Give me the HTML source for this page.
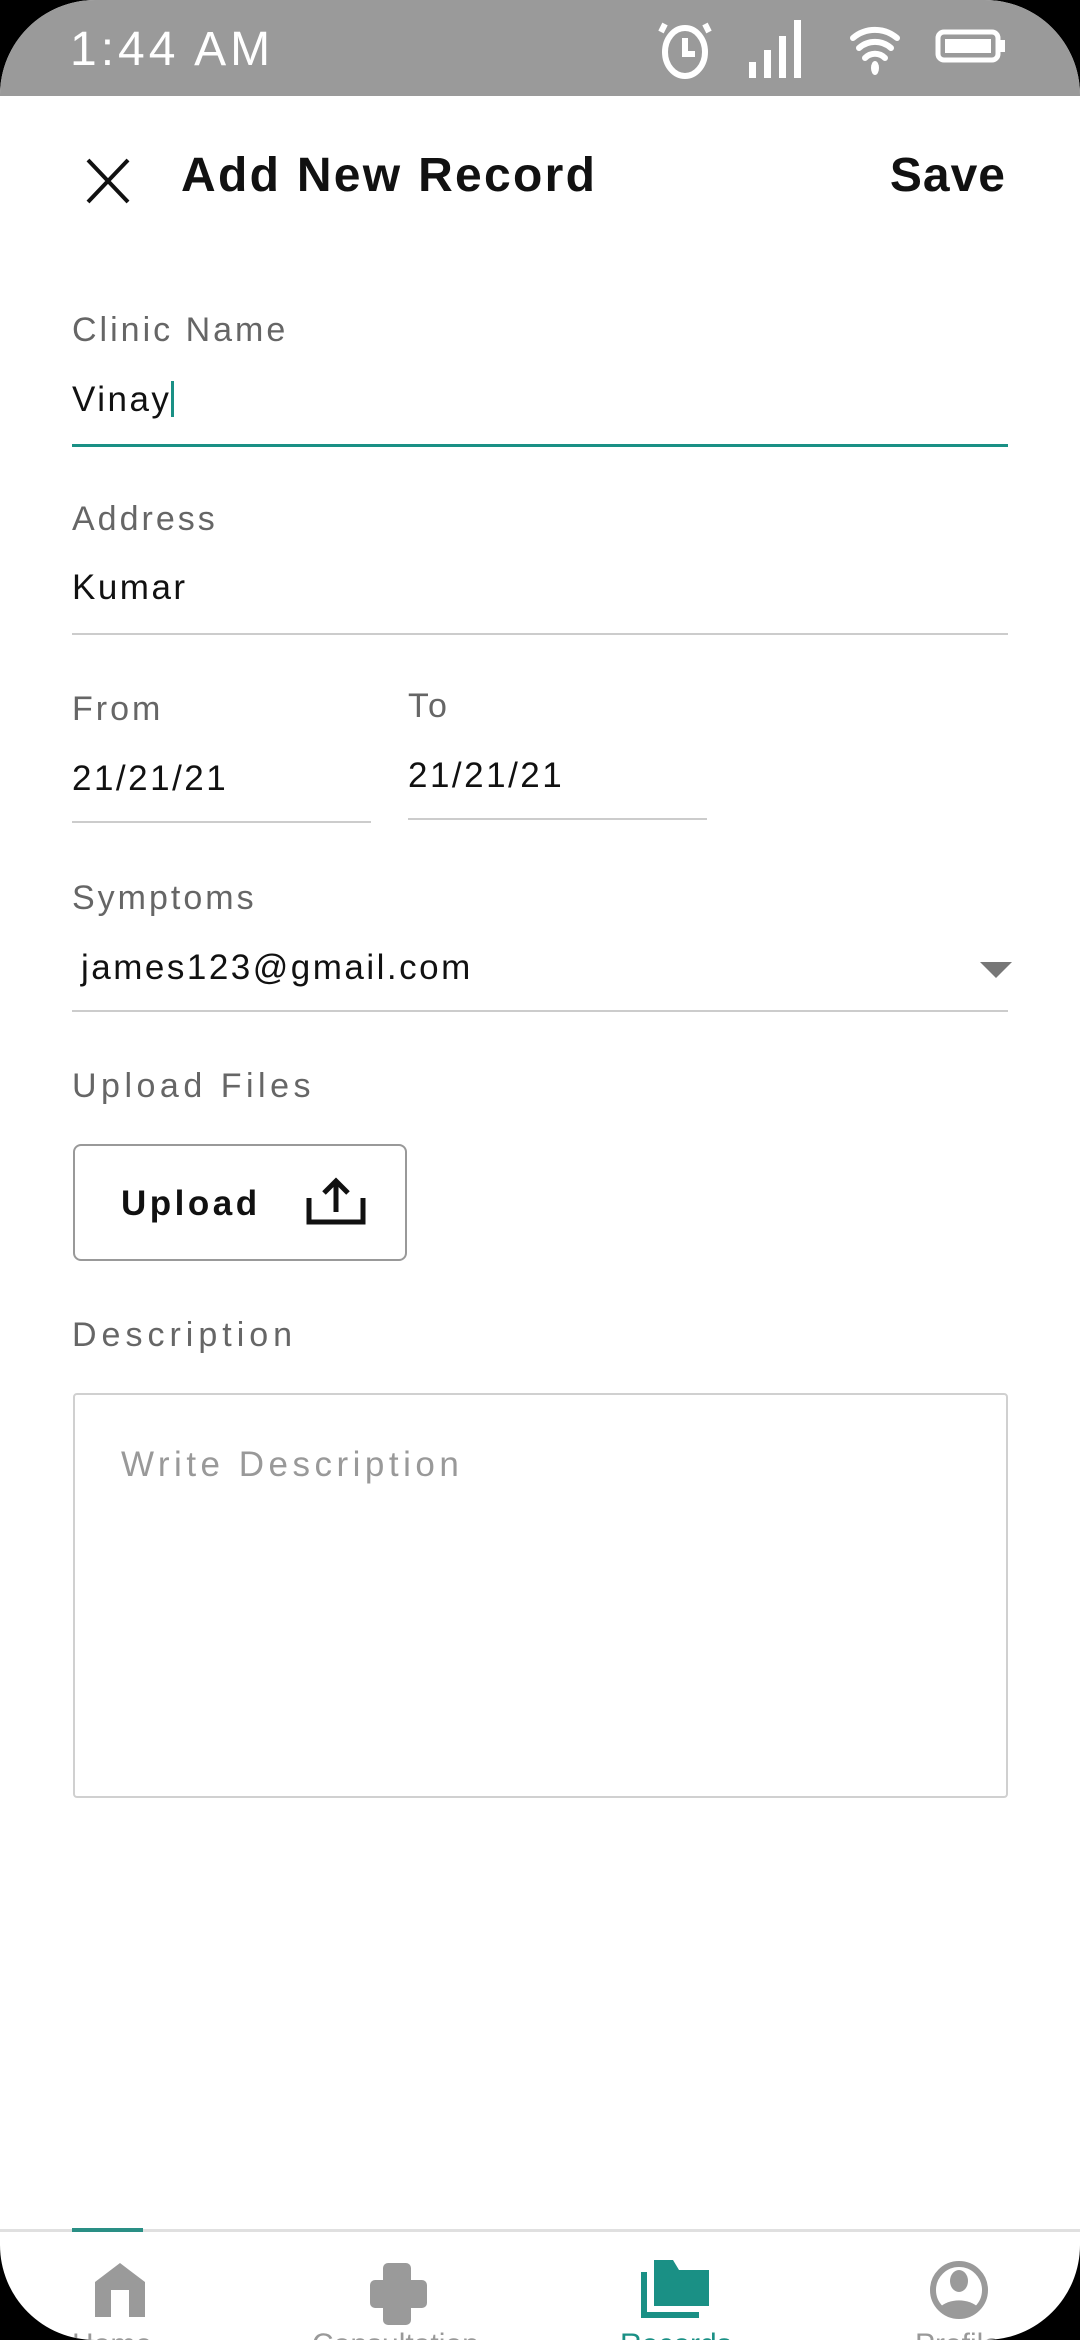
<!DOCTYPE html>
<html><head><meta charset="utf-8"><style>
*{margin:0;padding:0;box-sizing:border-box}
body{width:1080px;height:2340px;background:#000;font-family:"Liberation Sans",sans-serif;position:relative;overflow:hidden}
.screen{position:absolute;left:0;top:0;width:1080px;height:2340px;background:#fff;border-radius:95px;overflow:hidden}
.status{position:absolute;left:0;top:0;width:1080px;height:96px;background:#9a9a9a}
.abs{position:absolute;white-space:nowrap}
.lbl{font-size:34px;color:#666;letter-spacing:3px}
.val{font-size:35px;color:#111;letter-spacing:2.5px}
.line{position:absolute;height:2px;background:#ccc}
</style></head><body><div class="screen">
<div class="status">
<div class="abs" style="left:70px;top:22px;font-size:48px;color:#fff;letter-spacing:4px">1:44 AM</div>
<svg class="abs" style="left:650px;top:16px" width="370" height="66" viewBox="0 0 370 66">
<g fill="none" stroke="#fff" stroke-width="6"><ellipse cx="35" cy="36" rx="20" ry="24"/><path d="M35 22v16h10"/><path d="M15 8l-4 8M55 8l4 8"/></g>
<g fill="#fff"><rect x="99" y="46" width="7" height="16"/><rect x="114" y="34" width="7" height="28"/><rect x="129" y="20" width="7" height="42"/><rect x="144" y="4" width="7" height="58"/></g>
<g fill="none" stroke="#fff" stroke-width="6" stroke-linecap="round"><path d="M203 22a34 34 0 0 1 44 0M209 32a24 24 0 0 1 32 0M215 42a14 14 0 0 1 20 0"/></g>
<ellipse cx="225" cy="52" rx="4" ry="7" fill="#fff"/>
<rect x="288" y="16" width="60" height="28" rx="6" fill="none" stroke="#fff" stroke-width="5"/><rect x="295" y="23" width="46" height="14" fill="#fff"/><rect x="350" y="24" width="5" height="12" fill="#fff"/>
</svg>
</div>
<svg class="abs" style="left:84px;top:158px" width="48" height="46" viewBox="0 0 48 46"><path d="M4 2L44 44M44 2L4 44" stroke="#111" stroke-width="4"/></svg>
<div class="abs" style="left:181px;top:148px;font-size:48px;font-weight:bold;color:#111;letter-spacing:2.3px">Add New Record</div>
<div class="abs" style="right:74px;top:148px;font-size:48px;font-weight:bold;color:#111;letter-spacing:1px">Save</div>

<div class="abs lbl" style="left:72px;top:311px">Clinic Name</div>
<div class="abs val" style="left:72px;top:380px">Vinay<span style="display:inline-block;width:3px;height:36px;background:#1a9085;vertical-align:-6px"></span></div>
<div class="line" style="left:72px;top:444px;width:936px;height:3px;background:#1a9085"></div>

<div class="abs lbl" style="left:72px;top:500px">Address</div>
<div class="abs val" style="left:72px;top:568px">Kumar</div>
<div class="line" style="left:72px;top:633px;width:936px"></div>

<div class="abs lbl" style="left:72px;top:690px">From</div>
<div class="abs val" style="left:72px;top:759px">21/21/21</div>
<div class="line" style="left:72px;top:821px;width:299px"></div>
<div class="abs lbl" style="left:408px;top:687px">To</div>
<div class="abs val" style="left:408px;top:756px">21/21/21</div>
<div class="line" style="left:408px;top:818px;width:299px"></div>

<div class="abs lbl" style="left:72px;top:879px">Symptoms</div>
<div class="abs val" style="left:81px;top:948px">james123@gmail.com</div>
<svg class="abs" style="left:980px;top:962px" width="32" height="18"><path d="M0 0H32L16 16Z" fill="#777"/></svg>
<div class="line" style="left:72px;top:1010px;width:936px"></div>

<div class="abs lbl" style="left:72px;top:1067px;letter-spacing:4.5px">Upload Files</div>
<div class="abs" style="left:73px;top:1144px;width:334px;height:117px;border:2px solid #999;border-radius:8px"></div>
<div class="abs" style="left:121px;top:1184px;font-size:35px;font-weight:bold;color:#111;letter-spacing:3.5px">Upload</div>
<svg class="abs" style="left:305px;top:1176px" width="62" height="52" viewBox="0 0 62 52"><g fill="none" stroke="#111" stroke-width="5"><path d="M4 22V46H58V22"/><path d="M31 36V6M19 17L31 5L43 17"/></g></svg>

<div class="abs lbl" style="left:72px;top:1316px;letter-spacing:5px">Description</div>
<div class="abs" style="left:73px;top:1393px;width:935px;height:405px;border:2px solid #d0d0d0;border-radius:4px"></div>
<div class="abs" style="left:121px;top:1445px;font-size:35px;color:#999;letter-spacing:4.5px">Write Description</div>

<div class="line" style="left:0;top:2229px;width:1080px;height:3px;background:#e0e0e0"></div>
<div class="line" style="left:72px;top:2228px;width:71px;height:4px;background:#2a8f85"></div>
<svg class="abs" style="left:0;top:0" width="1080" height="2340">
<path d="M95 2282L120 2263L145 2282V2317H129V2290H111V2317H95Z" fill="#9a9a9a"/>
<path d="M388 2263h18a5 5 0 0 1 5 5v12h11a5 5 0 0 1 5 5v18a5 5 0 0 1-5 5h-11v12a5 5 0 0 1-5 5h-18a5 5 0 0 1-5-5v-12h-8a5 5 0 0 1-5-5v-18a5 5 0 0 1 5-5h8v-12a5 5 0 0 1 5-5z" fill="#9a9a9a"/>
<path d="M644 2272V2315H699" fill="none" stroke="#1a9085" stroke-width="6"/>
<path d="M654 2260H673L679 2270H709V2306H654Z" fill="#1a9085"/>
<circle cx="959" cy="2290" r="26" fill="none" stroke="#9a9a9a" stroke-width="6"/>
<ellipse cx="959" cy="2281" rx="9" ry="11" fill="#9a9a9a"/>
<path d="M940 2307a24 17 0 0 1 38 0a26 26 0 0 1-38 0z" fill="#9a9a9a"/>
</svg>
<div class="abs" style="left:72px;top:2328px;font-size:30px;color:#999">Home</div>
<div class="abs" style="left:312px;top:2328px;font-size:30px;color:#999">Consultation</div>
<div class="abs" style="left:620px;top:2328px;font-size:30px;color:#1a9085">Records</div>
<div class="abs" style="left:915px;top:2328px;font-size:30px;color:#999">Profile</div>
</div></body></html>
